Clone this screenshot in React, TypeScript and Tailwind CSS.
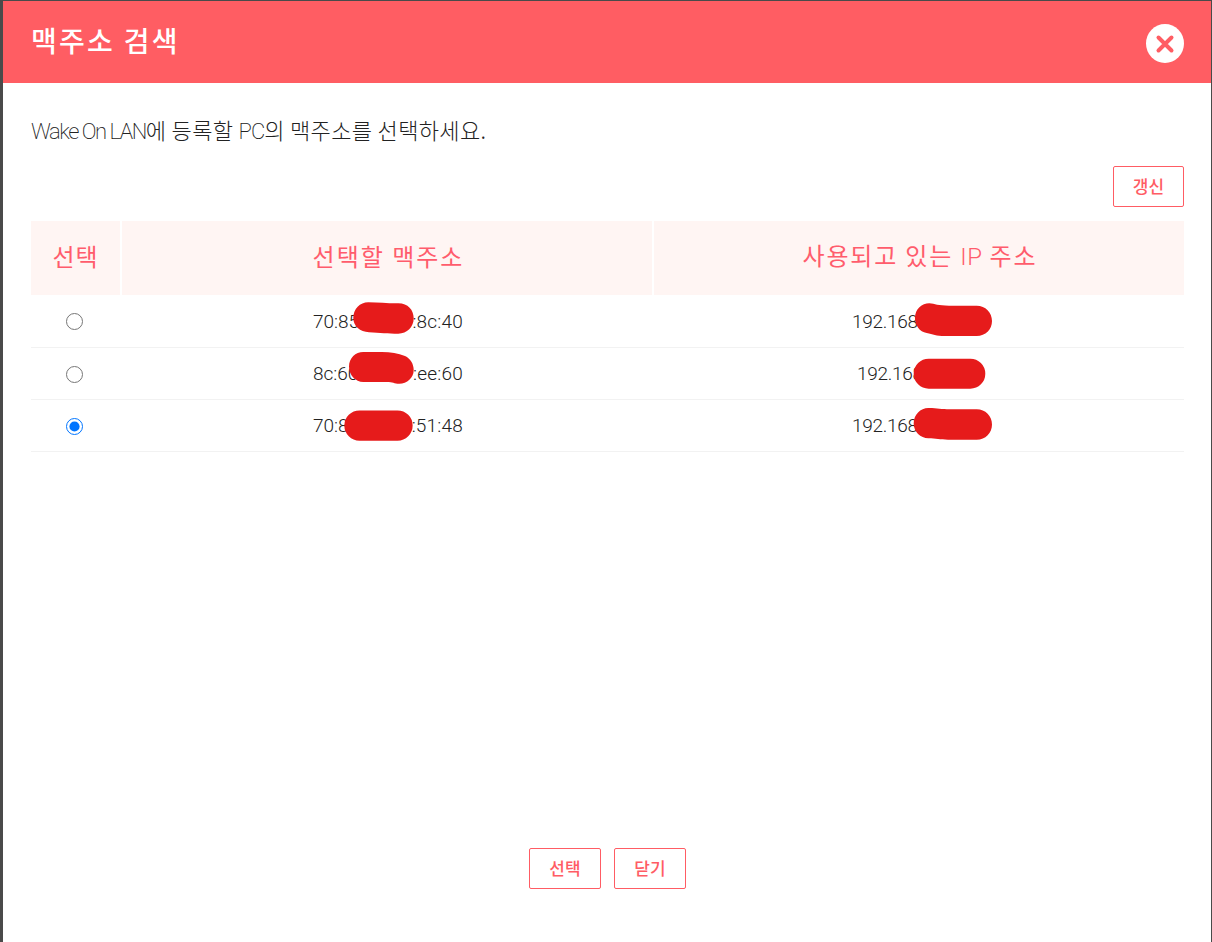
import { useState } from "react";

type Entry = {
  id: string;
  macStart: string;
  macEnd: string;
  macMask: string;
  ip: string;
  ipClass: string;
  ipMask: string;
  rowClass: string;
  radioClass: string;
};

const entries: Entry[] = [
  {
    id: "a",
    macStart: "70:85",
    macEnd: ":8c:40",
    macMask: "M40.3 23C40.3 14 47 7.3 55.3 7.3C66 7.6 75 8.4 85.3 8.3C95 8.3 100.7 15 100.7 23.3C100.7 32 94 38.7 85.3 38.7C75 38.7 67 37.6 56 37.2C47 37 40.3 31 40.3 23Z",
    ip: "192.168",
    ipClass: "",
    ipMask: "M63 23C63 14 70 8.3 77.3 8.3C83 8.8 86 10.7 97 10.7H124.7C133.5 10.7 140 17.5 140 26C140 34.5 133.5 41 124.7 41H93C84 41 81 39.5 74.7 38C67.5 37 63 30 63 23Z",
    rowClass: "h-[53px]",
    radioClass: "",
  },
  {
    id: "b",
    macStart: "8c:60",
    macEnd: ":ee:60",
    macMask: "M36 18.5C36 10 42.5 4 50.3 4H68.7C78 4 85 5.5 92 8C97.5 10.5 100.7 16 100.7 22C100.7 30 94 35.7 86.3 35.7C81 35.7 80 34 73.7 34H50.3C42.5 34 36 27 36 18.5Z",
    ip: "192.168",
    ipClass: "pl-[5px]",
    ipMask: "M76.7 10.7H118.3A15 15 0 0 1 118.3 40.7H76.7A15 15 0 0 1 76.7 10.7Z",
    rowClass: "h-[52px]",
    radioClass: "pt-px",
  },
  {
    id: "c",
    macStart: "70:85",
    macEnd: ":51:48",
    macMask: "M46.5 10.4H84.5A15.15 15.15 0 0 1 84.5 40.7H46.5A15.15 15.15 0 0 1 46.5 10.4Z",
    ip: "192.168",
    ipClass: "",
    ipMask: "M61.7 23.5C61.7 14.5 68.5 8 76.3 8C85 7.9 89 9.3 98 9.3H124.7C133.5 9.3 140 16 140 24.5C140 33 133.5 39.7 124.7 39.7H96C88 39.7 84 38.5 76.3 38.3C68.5 38.3 61.7 31.5 61.7 23.5Z",
    rowClass: "h-[52px]",
    radioClass: "pt-px",
  },
];

function Mask({ d }: { d: string }) {
  return (
    <svg className="absolute top-0 left-0 h-[52px] w-[150px] overflow-visible" viewBox="0 0 150 52">
      <path d={d} fill="#e61b1b" />
    </svg>
  );
}

function OutlineButton({ children, width = "w-[72px]" }: { children: string; width?: string }) {
  return (
    <button
      className={`flex h-[41px] items-center justify-center rounded-[2px] border border-[#ff5c64] pb-px text-[17px] font-medium text-[#ff5c64] ${width}`}
    >
      {children}
    </button>
  );
}

export default function App() {
  const [selected, setSelected] = useState("c");

  return (
    <div className="flex h-[942px] w-[1212px] flex-col border-t border-r border-l-[3px] border-[#4a4a4a] bg-white font-['Noto_Sans_CJK_KR',sans-serif] text-[#222]">
      <header className="flex h-[82px] shrink-0 items-center justify-between bg-[#ff5d63] pr-[27px] pl-[28px]">
        <h1 className="pb-[4px] text-[28px] leading-none font-medium tracking-[2.3px] whitespace-nowrap text-white">맥주소 검색</h1>
        <button aria-label="닫기" className="mt-[3px]">
          <svg width="38" height="39" viewBox="0 0 38 39">
            <ellipse cx="19" cy="19.5" rx="19" ry="19.5" fill="#fff" />
            <path d="M12.5 13.5L25.5 26.5M25.5 13.5L12.5 26.5" stroke="#ff5d63" strokeWidth="4" strokeLinecap="round" />
          </svg>
        </button>
      </header>

      <main className="flex grow flex-col pr-[27px] pl-[28px]">
        <p className="mt-[31px] h-[31px] text-[22px] leading-[30px] font-light tracking-[0.35px] whitespace-nowrap">
          <span className="font-['Roboto',sans-serif] font-extralight tracking-[-1.45px]">Wake On LAN</span>에 등록할{" "}
          <span className="font-['Roboto',sans-serif] font-extralight tracking-[-1px]">PC</span>의 맥주소를 선택하세요.
        </p>
        <div className="mt-[21px] flex justify-end">
          <OutlineButton width="w-[71px]">갱신</OutlineButton>
        </div>

        <section className="mt-[14px]">
          <div className="grid h-[74px] grid-cols-[89px_530px_530px] gap-[2px] text-[24px] leading-none text-[#ff5c6c]">
            <div className="flex items-center justify-center bg-[#fff5f3] pb-[4px] tracking-[1px]">선택</div>
            <div className="flex items-center justify-center bg-[#fff5f3] pb-[4px] pl-[3px] tracking-[2px]">선택할 맥주소</div>
            <div className="flex items-center justify-center bg-[#fff5f3] pb-[4px] pl-[2px]">
              <span className="tracking-[1.8px]">
                사용되고 있는 <span className="font-['Roboto',sans-serif] font-light tracking-[0.5px]">IP</span> 주소
              </span>
            </div>
          </div>
          {entries.map((entry) => (
            <div
              key={entry.id}
              className={`grid grid-cols-[90px_531px_532px] font-['Roboto',sans-serif] text-[19px] leading-none font-light ${entry.rowClass}`}
            >
              <label className={`flex items-center border-b border-[#f2f2f2] pl-[35px] ${entry.radioClass}`}>
                <input
                  type="radio"
                  name="mac"
                  className="m-0 size-[17px]"
                  checked={selected === entry.id}
                  onChange={() => setSelected(entry.id)}
                />
              </label>
              <div className="border-b border-[#f2f2f2] pl-[192px]">
                <div className="relative flex h-full w-[150px] items-center justify-between">
                  <span>{entry.macStart}</span>
                  <span className="tracking-[0.2px]">{entry.macEnd}</span>
                  <Mask d={entry.macMask} />
                </div>
              </div>
              <div className="border-b border-[#f2f2f2] pl-[200px]">
                <div className={`relative flex h-full w-[150px] items-center tracking-[-0.3px] ${entry.ipClass}`}>
                  <span>{entry.ip}</span>
                  <Mask d={entry.ipMask} />
                </div>
              </div>
            </div>
          ))}
        </section>

        <footer className="mt-auto mb-[53px] flex justify-center gap-[13px]">
          <OutlineButton>선택</OutlineButton>
          <OutlineButton>닫기</OutlineButton>
        </footer>
      </main>
    </div>
  );
}
